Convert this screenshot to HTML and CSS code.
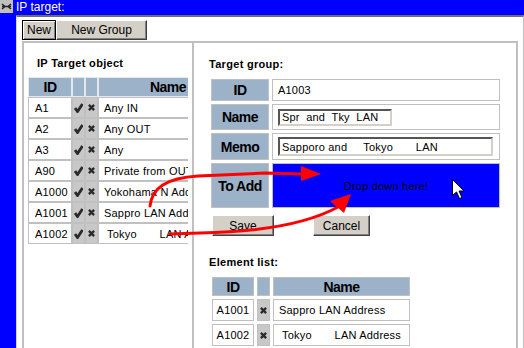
FILE: index.html
```html
<!DOCTYPE html>
<html lang="ja">
<head>
  <meta charset="UTF-8" />
  <title>IP target</title>
  <link rel="stylesheet" href="styles.css">
</head>
<body>
  <div class="titlebar">
    <span class="sysicon">
      <svg width="13" height="13" viewBox="0 0 13 13"><path d="M2 4l3 2.5-3 2.5M11 4l-3 2.5 3 2.5M2 6.5h9" stroke="#222" stroke-width="1.4" fill="none"/></svg>
    </span>
    <span class="title">IP target:</span>
  </div>
  <div class="main">
    <div class="sidebar"></div>
    <div class="frame">
      <div class="toolbar">
        <button class="btn default">New</button>
        <button class="btn group">New Group</button>
      </div>
      <div class="panels">
        <div class="panel left">
          <h2>IP Target object</h2>
          <div class="clip">
            <table class="objects">
              <tr class="head">
                <th class="c-id">ID</th><th class="c-mark"></th><th class="c-mark"></th><th class="c-name">Name</th>
              </tr>
              <tr><td class="id">A1</td><td class="mark"><svg class="ok" viewBox="0 0 9 9"><path d="M1 4.5L3.5 8L8.5 .5"/></svg></td><td class="mark"><svg class="del" viewBox="0 0 8 8"><path d="M1 1L7 7M7 1L1 7"/></svg></td><td class="name">Any IN</td></tr>
              <tr><td class="id">A2</td><td class="mark"><svg class="ok" viewBox="0 0 9 9"><path d="M1 4.5L3.5 8L8.5 .5"/></svg></td><td class="mark"><svg class="del" viewBox="0 0 8 8"><path d="M1 1L7 7M7 1L1 7"/></svg></td><td class="name">Any OUT</td></tr>
              <tr><td class="id">A3</td><td class="mark"><svg class="ok" viewBox="0 0 9 9"><path d="M1 4.5L3.5 8L8.5 .5"/></svg></td><td class="mark"><svg class="del" viewBox="0 0 8 8"><path d="M1 1L7 7M7 1L1 7"/></svg></td><td class="name">Any</td></tr>
              <tr><td class="id">A90</td><td class="mark"><svg class="ok" viewBox="0 0 9 9"><path d="M1 4.5L3.5 8L8.5 .5"/></svg></td><td class="mark"><svg class="del" viewBox="0 0 8 8"><path d="M1 1L7 7M7 1L1 7"/></svg></td><td class="name">Private from OUT</td></tr>
              <tr><td class="id">A1000</td><td class="mark"><svg class="ok" viewBox="0 0 9 9"><path d="M1 4.5L3.5 8L8.5 .5"/></svg></td><td class="mark"><svg class="del" viewBox="0 0 8 8"><path d="M1 1L7 7M7 1L1 7"/></svg></td><td class="name">Yokohama N Address</td></tr>
              <tr><td class="id">A1001</td><td class="mark"><svg class="ok" viewBox="0 0 9 9"><path d="M1 4.5L3.5 8L8.5 .5"/></svg></td><td class="mark"><svg class="del" viewBox="0 0 8 8"><path d="M1 1L7 7M7 1L1 7"/></svg></td><td class="name">Sappro LAN Address</td></tr>
              <tr><td class="id">A1002</td><td class="mark"><svg class="ok" viewBox="0 0 9 9"><path d="M1 4.5L3.5 8L8.5 .5"/></svg></td><td class="mark"><svg class="del" viewBox="0 0 8 8"><path d="M1 1L7 7M7 1L1 7"/></svg></td><td class="name"> Tokyo       LAN Address</td></tr>
            </table>
          </div>
        </div>
        <div class="panel right">
          <h2 class="first">Target group:</h2>
          <table class="form">
            <tr class="r-id"><th>ID</th><td>A1003</td></tr>
            <tr class="r-name"><th>Name</th><td><input class="name-input" type="text" value="Spr  and  Tky  LAN"></td></tr>
            <tr class="r-memo"><th>Memo</th><td><input class="memo-input" type="text" value="Sapporo and     Tokyo       LAN"></td></tr>
            <tr class="r-add"><th>To Add</th><td class="drop">Drop down here!</td></tr>
          </table>
          <div class="actions">
            <button class="btn save">Save</button>
            <button class="btn cancel">Cancel</button>
          </div>
          <h2 class="second">Element list:</h2>
          <table class="elements">
            <tr class="head"><th class="e-id">ID</th><th class="e-mark"></th><th class="e-name">Name</th></tr>
            <tr><td class="id">A1001</td><td class="mark"><svg class="del" viewBox="0 0 8 8"><path d="M1 1L7 7M7 1L1 7"/></svg></td><td class="name">Sappro LAN Address</td></tr>
            <tr><td class="id">A1002</td><td class="mark"><svg class="del" viewBox="0 0 8 8"><path d="M1 1L7 7M7 1L1 7"/></svg></td><td class="name"> Tokyo       LAN Address</td></tr>
          </table>
        </div>
      </div>
    </div>
  </div>

  <!-- drag hint arrows and mouse pointer, drawn over the page -->
  <svg class="overlay" width="524" height="348" viewBox="0 0 524 348">
    <g fill="none" stroke="#ff0000" stroke-width="3" stroke-linecap="round">
      <path d="M150 206C152 188 166 178 198 176L265 173L303 174"/>
      <path d="M170 234L200 233C258 232 305 225 338 207"/>
    </g>
    <g fill="#ff0000">
      <polygon points="301,166 321,174 301,181"/>
      <polygon points="351,194 344,213 330,201"/>
    </g>
    <path d="M452.5 179.5v16l4-3.5l3 6.5l2.5-1l-3-6.5h5z" fill="#fff" stroke="#000" stroke-width="1"/>
  </svg>
</body>
</html>
```

FILE: styles.css
```css
* {
  box-sizing: border-box;
}
body {
  margin: 0;
  height: 348px;
  overflow: hidden;
  position: relative;
  background: #fff;
  color: #000;
  font-family: "Liberation Sans", Arial, sans-serif;
  font-size: 11px;
}
.titlebar {
  height: 15px;
  display: flex;
  background: #0000ff;
  color: #fff;
}
.sysicon {
  width: 13px;
  height: 13px;
  margin-right: 3px;
  background: #c0c0c0;
  display: flex;
}
.title {
  font-size: 12px;
  line-height: 15px;
}
.main {
  display: flex;
  height: 333px;
}
.sidebar {
  width: 16px;
  background: #0000ff;
}
.frame {
  flex: 1;
  display: flex;
  flex-direction: column;
  border-top: 2px solid #6e6e6e;
  border-left: 1px solid #d4d4d4;
  border-right: 1px solid #c0c0c0;
  padding: 3px 0 0 5px;
}
.toolbar {
  display: flex;
  height: 20px;
}
.btn {
  height: 20px;
  padding: 0;
  font-family: "Liberation Sans", Arial, sans-serif;
  font-size: 12px;
  color: #000;
  background: #d4d0c8;
  border: 1px solid;
  border-color: #fff #404040 #404040 #fff;
  box-shadow: inset -1px -1px #808080;
}
.btn.default {
  width: 34px;
  border-color: #000;
  box-shadow: inset 1px 1px #fff, inset -1px -1px #808080;
}
.btn.group {
  width: 91px;
}
.panels {
  flex: 1;
  display: flex;
  margin-top: 1px;
  overflow: hidden;
}
.panel {
  border: 2px solid #c0c0c0;
  border-bottom: none;
  overflow: hidden;
}
.left {
  width: 172px;
}
.right {
  width: 326px;
  margin-left: -2px;
}
h2 {
  margin: 0;
  font-size: 11px;
  line-height: 13px;
  letter-spacing: 0.3px;
}
.left h2 {
  margin: 14px 0 7px 13px;
}
.right h2.first {
  margin: 15px 0 5px 15px;
}
.right h2.second {
  margin: 20px 0 5px 15px;
}
.clip {
  margin-left: 4px;
  width: 160px;
  overflow: hidden;
}
table {
  border-collapse: separate;
  table-layout: fixed;
}
th {
  padding: 0;
  background: #9cb2c8;
  font-size: 14px;
  font-weight: bold;
  letter-spacing: -0.5px;
  text-align: center;
}
td {
  padding: 0;
  border: 1px solid #c0c0c0;
  white-space: pre;
  overflow: hidden;
  letter-spacing: 0.2px;
}
.objects {
  border-spacing: 0;
  width: 210px;
}
.objects .head {
  height: 20px;
}
.objects tr {
  height: 21px;
}
.objects th {
  border: 1px solid #e4e8ec;
}
.c-id { width: 44px; }
.c-mark { width: 13px; }
.c-name { width: 140px; }
.objects .id {
  padding-left: 6px;
}
.name {
  padding-left: 5px;
}
.mark {
  background: #c8c8c8;
  text-align: center;
  line-height: 0;
}
.mark svg {
  fill: none;
  stroke: #2a2a2a;
}
.ok {
  width: 9px;
  height: 10px;
  stroke-width: 2.8;
}
.del {
  width: 7px;
  height: 7px;
  stroke-width: 2.6;
}
.form {
  border-spacing: 3px;
  margin-left: 14px;
}
.form th {
  width: 58px;
  border: 1px solid #c0c0c0;
}
.form td {
  width: 228px;
  padding-left: 5px;
}
.r-id { height: 22px; }
.r-name { height: 26px; }
.r-memo { height: 27px; }
.r-add { height: 45px; }
input {
  display: block;
  margin: 0;
  padding: 0 0 0 2px;
  font-family: "Liberation Sans", Arial, sans-serif;
  font-size: 11px;
  letter-spacing: 0.2px;
  color: #000;
  background: #fff;
  border: 2px solid;
  border-color: #555 #d4d0c8 #d4d0c8 #555;
  white-space: pre;
}
.name-input {
  width: 114px;
  height: 17px;
}
.memo-input {
  width: 215px;
  height: 19px;
}
.form td.drop {
  padding: 0;
  background: #0000ff;
  color: #000;
  text-align: center;
}
.actions {
  display: flex;
  margin: 4px 0 0 18px;
}
.btn.save {
  width: 62px;
  height: 21px;
}
.btn.cancel {
  width: 57px;
  height: 21px;
  margin-left: 39px;
}
.elements {
  border-spacing: 3px;
  margin-left: 15px;
}
.elements .head {
  height: 19px;
}
.elements tr {
  height: 22px;
}
.elements th {
  border: 1px solid #c0c0c0;
}
.e-id { width: 42px; }
.e-mark { width: 13px; }
.e-name { width: 137px; }
.elements .id {
  text-align: center;
}
.overlay {
  position: absolute;
  top: 0;
  left: 0;
  pointer-events: none;
}
```
